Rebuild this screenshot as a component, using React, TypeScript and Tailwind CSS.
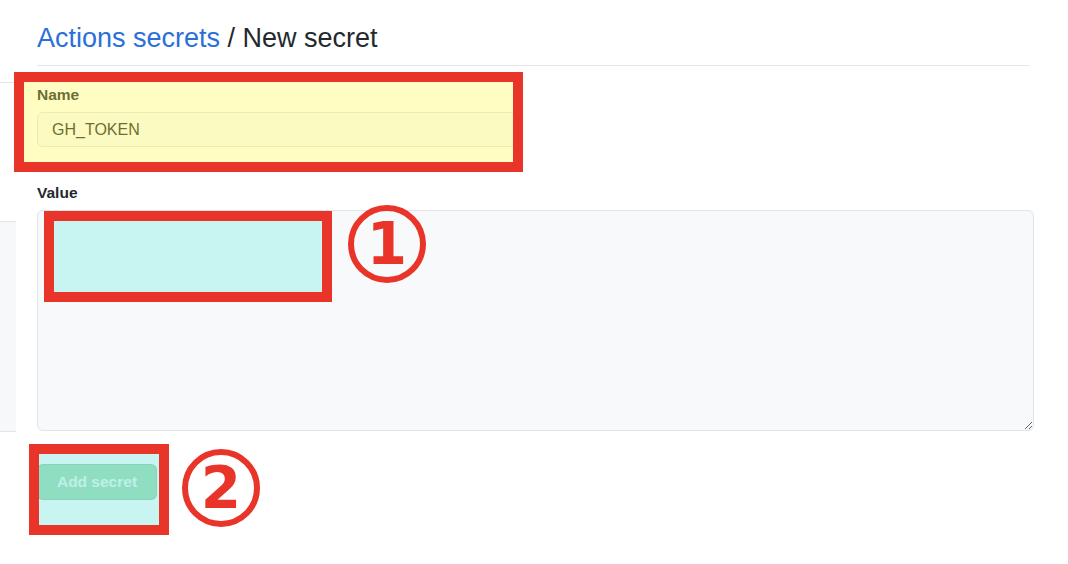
export default function App() {
  return (
    <div className="relative flex h-[564px] w-[1068px] overflow-hidden bg-white font-['Liberation_Sans',Arial,sans-serif] text-[#24292e]">
      {/* clipped settings sidebar */}
      <div className="flex w-[16px] shrink-0 flex-col">
        <div className="mt-[82px] h-px bg-[#e1e4e8]" />
        <div className="mt-[138px] h-[211px] border-y border-[#e1e4e8] bg-[#f7f8fa]" />
      </div>

      <main className="ml-[21px] flex w-[997px] flex-col">
        <div className="mr-[4px] border-b border-[#e6e8eb] pb-[10px] pt-[21px] text-[27px] leading-[34px]">
          <a className="text-[#2b6fd9]">Actions secrets</a> / New secret
        </div>

        <label className="mt-[19px] text-[15.5px] font-bold leading-[20px]">Name</label>
        <input
          readOnly
          value="GH_TOKEN"
          className="mt-[7px] h-[35px] w-[482px] rounded-[6px] border border-[#e1e4e8] bg-[#fafbfc] px-[14px] text-[16px] text-[#24292e] outline-none"
        />

        <label className="mt-[36px] text-[15.5px] font-bold leading-[20px]">Value</label>
        <textarea
          readOnly
          className="mt-[7px] h-[221px] w-full resize-y rounded-[6px] border border-[#e1e4e8] bg-[#f8f9fb] outline-none"
        />

        <div className="mt-[33px]">
          <button
            disabled
            className="h-[36px] w-[120px] rounded-[6px] border border-[rgba(27,31,35,0.1)] bg-[#94d3a2] text-[15.5px] font-bold text-white/80"
          >
            Add secret
          </button>
        </div>
      </main>

      {/* annotation overlays */}
      <div className="pointer-events-none absolute left-[14px] top-[72px] h-[100px] w-[509px] border-[10px] border-[#e9342a]">
        <div className="h-full w-full bg-[rgba(255,248,70,0.33)]" />
      </div>

      <div className="pointer-events-none absolute left-[44px] top-[211px] h-[91px] w-[288px] border-[10px] border-[#e9342a] bg-[#c8f4f1]" />
      <div className="pointer-events-none absolute left-[348px] top-[205px] flex h-[78px] w-[78px] items-center justify-center rounded-full border-[6px] border-[#e9342a] font-['DejaVu_Sans',sans-serif] text-[58px] font-bold leading-none text-[#e9342a]">
        1
      </div>

      <div className="pointer-events-none absolute left-[29px] top-[444px] h-[91px] w-[140px] border-[10px] border-[#e9342a]">
        <div className="h-full w-full bg-[rgba(138,234,227,0.47)]" />
      </div>
      <div className="pointer-events-none absolute left-[182px] top-[449px] flex h-[78px] w-[78px] items-center justify-center rounded-full border-[6px] border-[#e9342a] font-['DejaVu_Sans',sans-serif] text-[58px] font-bold leading-none text-[#e9342a]">
        2
      </div>
    </div>
  );
}
